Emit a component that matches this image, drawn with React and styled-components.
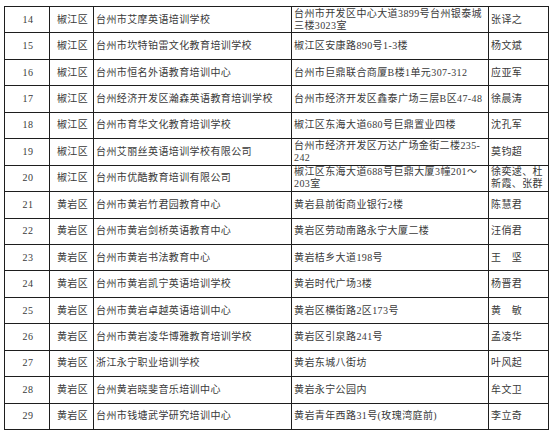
import styled, { createGlobalStyle } from 'styled-components';

const GlobalStyle = createGlobalStyle`
  html, body {
    margin: 0;
    padding: 0;
    background: #ffffff;
  }
`;

const rows = [
  ['14', '椒江区', '台州市艾摩英语培训学校', '台州市开发区中心大道3899号台州银泰城\n三楼3023室', '张译之'],
  ['15', '椒江区', '台州市坎特铂雷文化教育培训学校', '椒江区安康路890号1-3楼', '杨文斌'],
  ['16', '椒江区', '台州市恒名外语教育培训中心', '台州市巨鼎联合商厦B楼1单元307-312', '应亚军'],
  ['17', '椒江区', '台州经济开发区瀚森英语教育培训学校', '台州市经济开发区鑫泰广场三层B区47-48', '徐晨涛'],
  ['18', '椒江区', '台州市育华文化教育培训学校', '椒江区东海大道680号巨鼎置业四楼', '沈孔军'],
  ['19', '椒江区', '台州艾丽丝英语培训学校有限公司', '台州市经济开发区万达广场金街二楼235-\n242', '莫钧超'],
  ['20', '椒江区', '台州市优酷教育培训有限公司', '椒江区东海大道688号巨鼎大厦3幢201～\n203室', '徐奕逑、杜\n新霞、张群'],
  ['21', '黄岩区', '台州市黄岩竹君园教育中心', '黄岩县前街商业银行2楼', '陈慧君'],
  ['22', '黄岩区', '台州市黄岩剑桥英语教育中心', '黄岩区劳动南路永宁大厦二楼', '汪俏君'],
  ['23', '黄岩区', '台州市黄岩书法教育中心', '黄岩桔乡大道198号', '王　坚'],
  ['24', '黄岩区', '台州市黄岩凯宁英语培训学校', '黄岩时代广场3楼', '杨晋君'],
  ['25', '黄岩区', '台州市黄岩卓越英语培训中心', '黄岩区横街路2区173号', '黄　敏'],
  ['26', '黄岩区', '台州市黄岩凌华博雅教育培训学校', '黄岩区引泉路241号', '孟凌华'],
  ['27', '黄岩区', '浙江永宁职业培训学校', '黄岩东城八街坊', '叶风起'],
  ['28', '黄岩区', '台州黄岩晓斐音乐培训中心', '黄岩永宁公园内', '牟文卫'],
  ['29', '黄岩区', '台州市钱塘武学研究培训中心', '黄岩青年西路31号(玫瑰湾庭前)', '李立奇'],
];

const columns = [
  { width: 45, align: 'center' },
  { width: 44, align: 'center' },
  { width: 198, align: 'left' },
  { width: 197, align: 'left' },
  { width: 60, align: 'left' },
];

const Page = styled.div`
  padding: 6px 0 0 4px;
`;

const Table = styled.table`
  border-collapse: collapse;
  table-layout: fixed;
  width: 544px;
  font-family: "Liberation Serif", "Noto Sans CJK SC", serif;
  font-size: 10px;
  color: #3a3a3a;
`;

const Row = styled.tr`
  height: 26.45px;
`;

const Cell = styled.td`
  border: 1px solid #1e1e1e;
  padding: 0 0 0 2px;
  text-align: ${(p) => p.$align};
  vertical-align: middle;
  line-height: 12px;
  letter-spacing: 0.4px;
  white-space: pre-line;
  overflow: hidden;
`;

const App = () => (
  <Page>
    <GlobalStyle />
    <Table>
      <colgroup>
        {columns.map((c, i) => (
          <col key={i} style={{ width: c.width }} />
        ))}
      </colgroup>
      <tbody>
        {rows.map((r) => (
          <Row key={r[0]}>
            {r.map((text, i) => (
              <Cell key={i} $align={columns[i].align}>
                {text}
              </Cell>
            ))}
          </Row>
        ))}
      </tbody>
    </Table>
  </Page>
);

export default App;
